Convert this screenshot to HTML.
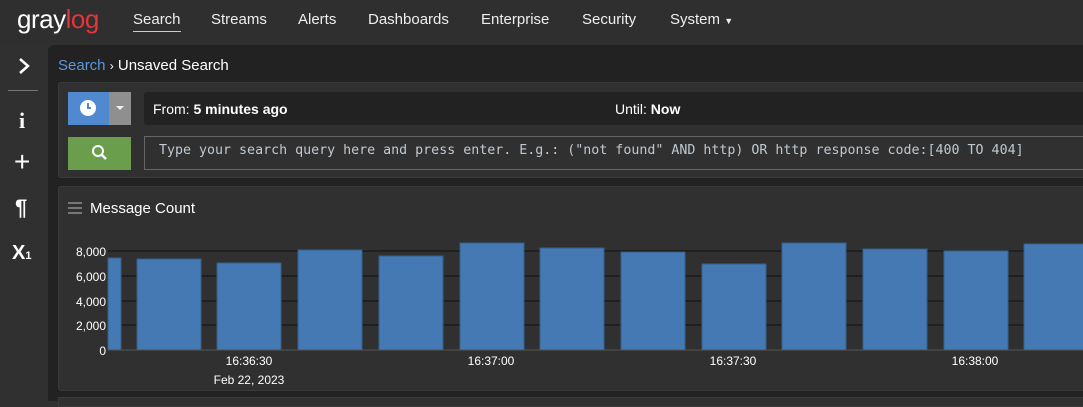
<!DOCTYPE html>
<html><head><meta charset="utf-8">
<style>
*{box-sizing:border-box;margin:0;padding:0}
body{width:1083px;height:401px;overflow:hidden;background:#303030;font-family:"Liberation Sans",sans-serif;color:#fff;position:relative}
.nav{position:absolute;left:0;top:0;width:1083px;height:45px;background:#2f2f2f}
.logo{position:absolute;left:17px;top:4px;font-size:26px;letter-spacing:-0.5px}
.logo .r{color:#e5343b}
.nav a{position:absolute;top:11px;font-size:15px;color:#eee}
.side{position:absolute;left:0;top:45px;width:48px;height:356px;background:#303030}
.main{position:absolute;left:48px;top:45px;width:1035px;height:356px;background:#222;border-top-left-radius:6px}
.crumb{position:absolute;left:58px;top:57px;font-size:15px}
.q{position:absolute;left:58px;top:82px;width:1030px;height:96px;background:#303030;border:1px solid #3a3a3a;border-radius:3px}
.w{position:absolute;left:58px;top:186px;width:1030px;height:205px;background:#303030;border:1px solid #3a3a3a;border-radius:3px}
.w2{position:absolute;left:58px;top:397px;width:1030px;height:10px;background:#303030;border:1px solid #3a3a3a}
</style></head><body>
<div class="nav">
<div class="logo">gray<span class="r">log</span></div>
<a style="left:133px">Search</a>
<div style="position:absolute;left:133px;top:31px;width:48px;height:1px;background:#ccc"></div>
<a style="left:211px">Streams</a>
<a style="left:298px">Alerts</a>
<a style="left:368px">Dashboards</a>
<a style="left:481px">Enterprise</a>
<a style="left:582px">Security</a>
<a style="left:670px">System <span style="font-size:9px">▼</span></a>
</div>
<div class="side">
<svg style="position:absolute;left:17px;top:11px" width="14" height="20"><path d="M3 3 L11 10 L3 17" stroke="#fff" stroke-width="2.5" fill="none"/></svg>
<div style="position:absolute;left:8px;top:45px;width:30px;height:1px;background:#777"></div>
<div style="position:absolute;left:19px;top:63px;font-size:22px;font-weight:bold;font-family:'Liberation Serif',serif">i</div>
<div style="position:absolute;left:14px;top:102px;font-size:28px;line-height:30px">+</div>
<div style="position:absolute;left:15px;top:150px;font-size:22px;font-weight:bold">¶</div>
<div style="position:absolute;left:12px;top:197px;font-size:20px;font-weight:bold">X<span style="font-size:11px">1</span></div>
</div>
<div class="main"></div>
<div class="crumb"><span style="color:#5a97dc">Search</span> <span style="font-size:12px">›</span> Unsaved Search</div>
<div class="q">
<div style="position:absolute;left:9px;top:9px;width:41px;height:33px;background:#5089cf"></div>
<svg style="position:absolute;left:20px;top:16px" width="18" height="18"><circle cx="9" cy="9" r="8" fill="#fff"/><path d="M9 4V9H12" stroke="#5089cf" stroke-width="2" fill="none"/></svg>
<div style="position:absolute;left:50px;top:9px;width:22px;height:33px;background:#8f8f8f"></div>
<div style="position:absolute;left:57px;top:23px;border-left:4px solid transparent;border-right:4px solid transparent;border-top:4px solid #eee"></div>
<div style="position:absolute;left:85px;top:9px;width:950px;height:33px;background:#222;border-radius:3px"></div>
<div style="position:absolute;left:94px;top:18px;font-size:14px">From: <b>5 minutes ago</b></div>
<div style="position:absolute;left:556px;top:18px;font-size:14px">Until: <b>Now</b></div>
<div style="position:absolute;left:9px;top:54px;width:63px;height:33px;background:#6b9e4c"></div>
<svg style="position:absolute;left:32px;top:61px" width="18" height="18"><circle cx="7" cy="7" r="5" stroke="#fff" stroke-width="2" fill="none"/><path d="M11 11L15 15" stroke="#fff" stroke-width="2.5"/></svg>
<div style="position:absolute;left:85px;top:53px;width:950px;height:34px;background:#303030;border:1px solid #666"></div>
<div style="position:absolute;left:100px;top:60px;font-family:'DejaVu Sans Mono',monospace;font-size:13.3px;color:#bfc8d0;white-space:nowrap">Type your search query here and press enter. E.g.: ("not found" AND http) OR http response code:[400 TO 404]</div>
</div>
<div class="w">
<svg style="position:absolute;left:9px;top:15px" width="14" height="12"><rect y="0" width="14" height="2" fill="#777"/><rect y="5" width="14" height="2" fill="#777"/><rect y="10" width="14" height="2" fill="#777"/></svg>
<div style="position:absolute;left:31px;top:13px;font-size:15px">Message Count</div>
</div>
<div class="w2"></div>
<svg style="position:absolute;left:0;top:0" width="1083" height="401" font-family="Liberation Sans" font-size="12" fill="#fff">
<g stroke="#111" stroke-width="1">
<line x1="108" y1="251" x2="1083" y2="251"/><line x1="108" y1="276" x2="1083" y2="276"/><line x1="108" y1="301" x2="1083" y2="301"/><line x1="108" y1="325" x2="1083" y2="325"/>
</g>
<g fill="#4479b3" stroke="#355f8e">
<rect x="108" y="258" width="13" height="92"/>
<rect x="137" y="259" width="64" height="91"/>
<rect x="217" y="263" width="64" height="87"/>
<rect x="298" y="250" width="64" height="100"/>
<rect x="379" y="256" width="64" height="94"/>
<rect x="460" y="243" width="64" height="107"/>
<rect x="540" y="248" width="64" height="102"/>
<rect x="621" y="252" width="64" height="98"/>
<rect x="702" y="264" width="64" height="86"/>
<rect x="782" y="243" width="64" height="107"/>
<rect x="863" y="249" width="64" height="101"/>
<rect x="944" y="251" width="64" height="99"/>
<rect x="1024" y="244" width="64" height="106"/>
</g>
<line x1="108" y1="350" x2="1083" y2="350" stroke="#555"/>
<g text-anchor="end"><text x="106" y="256">8,000</text><text x="106" y="281">6,000</text><text x="106" y="306">4,000</text><text x="106" y="330">2,000</text><text x="106" y="355">0</text></g>
<g text-anchor="middle"><text x="249" y="365">16:36:30</text><text x="249" y="384">Feb 22, 2023</text><text x="491" y="365">16:37:00</text><text x="733" y="365">16:37:30</text><text x="975" y="365">16:38:00</text></g>
</svg>
</body></html>
